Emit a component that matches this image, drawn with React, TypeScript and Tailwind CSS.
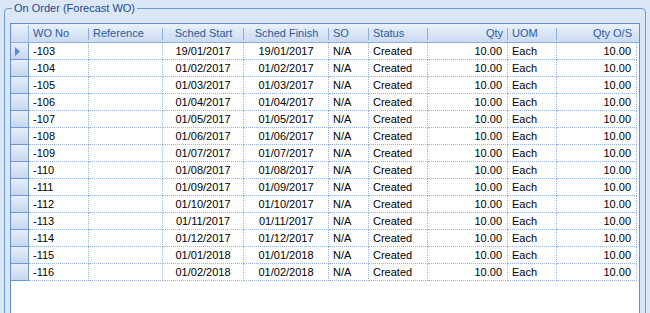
import * as React from "react";

type Col = { key: string; label: string; w: string; align: "left" | "center" | "right" };

const cols: Col[] = [
  { key: "wo", label: "WO No", w: "w-[60px]", align: "left" },
  { key: "ref", label: "Reference", w: "w-[74px]", align: "left" },
  { key: "start", label: "Sched Start", w: "w-[81px]", align: "center" },
  { key: "finish", label: "Sched Finish", w: "w-[85px]", align: "center" },
  { key: "so", label: "SO", w: "w-[40px]", align: "left" },
  { key: "status", label: "Status", w: "w-[59px]", align: "left" },
  { key: "qty", label: "Qty", w: "w-[80px]", align: "right" },
  { key: "uom", label: "UOM", w: "w-[49px]", align: "left" },
  { key: "qos", label: "Qty O/S", w: "w-[80px]", align: "right" },
];

const dates = [
  "19/01/2017",
  "01/02/2017",
  "01/03/2017",
  "01/04/2017",
  "01/05/2017",
  "01/06/2017",
  "01/07/2017",
  "01/08/2017",
  "01/09/2017",
  "01/10/2017",
  "01/11/2017",
  "01/12/2017",
  "01/01/2018",
  "01/02/2018",
];

const rows = dates.map((d, i) => ({
  wo: `-${103 + i}`,
  ref: "",
  start: d,
  finish: d,
  so: "N/A",
  status: "Created",
  qty: "10.00",
  uom: "Each",
  qos: "10.00",
}));

const alignCls = {
  left: "justify-start pl-[4px]",
  center: "justify-center",
  right: "justify-end pr-[5px]",
};

export default function App() {
  return (
    <div className="w-[650px] h-[313px] overflow-hidden bg-[#dce7f5] font-['Liberation_Sans',Arial,sans-serif] text-[11px] leading-[13px]">
      <fieldset className="mt-[2px] ml-[4px] w-[642px] h-[400px] border border-[#6e9bd6] rounded-[4px] px-[5px]">
        <legend className="ml-[2px] px-[2px] text-[#1e4a8a]">On Order (Forecast WO)</legend>

        {/* grid */}
        <div className="mt-[8px] w-[630px] h-[330px] border border-[#5f8fd4] bg-white">
          {/* header */}
          <div className="flex h-[19px] pt-px border-b border-[#8fb0de] bg-linear-to-b from-[#eaf1fa] via-[#dae6f5] to-[#c9daf0]">
            <div className="w-[18px] border-r border-[#9ab6de]" />
            {cols.map((c, i) => (
              <div key={c.key} className={`${c.w} relative flex items-center text-[#2c5a9c] ${alignCls[c.align]}`}>
                {c.label}
                {i < cols.length - 1 && (
                  <span className="absolute right-0 top-[3px] h-[12px] w-px bg-[#8eaedb]" />
                )}
              </div>
            ))}
          </div>

          {/* rows */}
          {rows.map((r, ri) => (
            <div key={r.wo} className="flex h-[17px]">
              <div className="w-[18px] flex items-center pl-[4px] border-r border-b border-[#6d98d4] bg-linear-to-b from-[#e6eef9] to-[#c6d7ee]">
                {ri === 0 && (
                  <svg width="5" height="9" viewBox="0 0 5 9">
                    <path d="M0 0 L5 4.5 L0 9 Z" fill="#5b8ad0" />
                  </svg>
                )}
              </div>
              {cols.map((c) => (
                <div
                  key={c.key}
                  className={`${c.w} flex items-center border-r border-b border-dotted border-[#94b5e2] text-black ${alignCls[c.align]}`}
                >
                  {(r as Record<string, string>)[c.key]}
                </div>
              ))}
            </div>
          ))}
        </div>
      </fieldset>
    </div>
  );
}
